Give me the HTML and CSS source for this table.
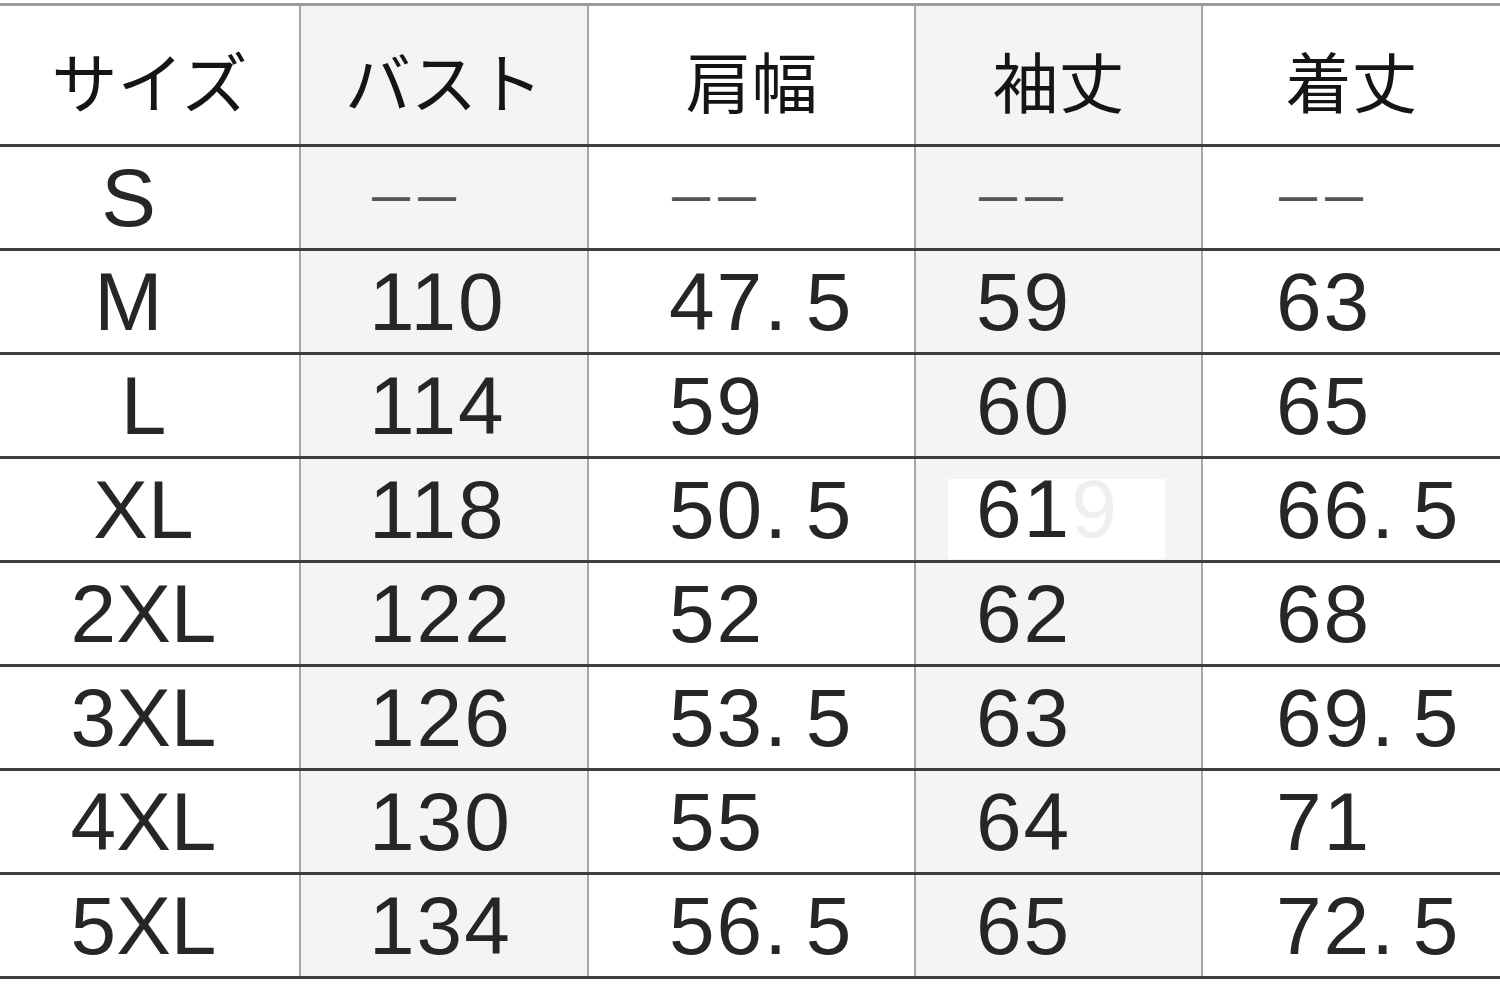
FILE: index.html
```html
<!DOCTYPE html>
<html lang="ja">
<head>
<meta charset="utf-8">
<title>サイズ表</title>
<link rel="stylesheet" href="styles.css">
</head>
<body>
<table class="chart">
  <colgroup>
    <col class="c-size">
    <col class="c-bust">
    <col class="c-shoulder">
    <col class="c-sleeve">
    <col class="c-length">
  </colgroup>
  <thead>
    <tr>
      <th class="head">サイズ</th>
      <th class="head shade">バスト</th>
      <th class="head">肩幅</th>
      <th class="head shade">袖丈</th>
      <th class="head">着丈</th>
    </tr>
  </thead>
  <tbody>
    <tr>
      <td class="size narrow">S</td>
      <td class="num bust shade"><span class="dash">——</span></td>
      <td class="num shoulder"><span class="dash">——</span></td>
      <td class="num sleeve shade"><span class="dash">——</span></td>
      <td class="num length"><span class="dash">——</span></td>
    </tr>
    <tr>
      <td class="size narrow">M</td>
      <td class="num bust shade">110</td>
      <td class="num shoulder">47. 5</td>
      <td class="num sleeve shade">59</td>
      <td class="num length">63</td>
    </tr>
    <tr>
      <td class="size">L</td>
      <td class="num bust shade">114</td>
      <td class="num shoulder">59</td>
      <td class="num sleeve shade">60</td>
      <td class="num length">65</td>
    </tr>
    <tr>
      <td class="size">XL</td>
      <td class="num bust shade">118</td>
      <td class="num shoulder">50. 5</td>
      <td class="num sleeve shade"><span class="patch">61<span class="faint">9</span></span></td>
      <td class="num length">66. 5</td>
    </tr>
    <tr>
      <td class="size">2XL</td>
      <td class="num bust shade">122</td>
      <td class="num shoulder">52</td>
      <td class="num sleeve shade">62</td>
      <td class="num length">68</td>
    </tr>
    <tr>
      <td class="size">3XL</td>
      <td class="num bust shade">126</td>
      <td class="num shoulder">53. 5</td>
      <td class="num sleeve shade">63</td>
      <td class="num length">69. 5</td>
    </tr>
    <tr>
      <td class="size">4XL</td>
      <td class="num bust shade">130</td>
      <td class="num shoulder">55</td>
      <td class="num sleeve shade">64</td>
      <td class="num length">71</td>
    </tr>
    <tr>
      <td class="size">5XL</td>
      <td class="num bust shade">134</td>
      <td class="num shoulder">56. 5</td>
      <td class="num sleeve shade">65</td>
      <td class="num length">72. 5</td>
    </tr>
  </tbody>
</table>
</body>
</html>
```

FILE: styles.css
```css
html, body {
  margin: 0;
  padding: 0;
  background: #ffffff;
  overflow: hidden;
}

.chart {
  width: 1500px;
  margin-top: 3px;
  border-collapse: collapse;
  table-layout: fixed;
  color: #262626;
}

.c-size { width: 300px; }
.c-bust { width: 288px; }
.c-shoulder { width: 327px; }
.c-sleeve { width: 287px; }
.c-length { width: 298px; }

.chart th,
.chart td {
  padding: 0;
  border-left: 2px solid #a6a6a6;
  border-right: 2px solid #a6a6a6;
  border-bottom: 3px solid #3e3e3e;
  vertical-align: middle;
}

.chart th:first-child,
.chart td:first-child {
  border-left: none;
}

.chart th:last-child,
.chart td:last-child {
  border-right: none;
}

.chart th.head {
  height: 130px;
  border-top: 3px solid #9c9c9c;
  padding-top: 8px;
  font-family: "Noto Sans CJK JP", "Noto Sans", sans-serif;
  font-size: 66px;
  font-weight: 400;
  line-height: 1;
  text-align: center;
  color: #151515;
}

.shade {
  background: #f4f4f4;
}

.chart td {
  height: 101px;
  font-family: "Liberation Sans", Arial, sans-serif;
  font-size: 82px;
  line-height: 1;
}

.chart td.size {
  text-align: center;
  padding-right: 12px;
}

.chart td.narrow {
  padding-right: 42px;
}

.num {
  text-align: left;
  letter-spacing: 2px;
  word-spacing: -8px;
}

.chart td.bust { padding-left: 68px; }
.chart td.shoulder { padding-left: 80px; }
.chart td.sleeve { padding-left: 60px; }
.chart td.length { padding-left: 73px; }

.dash {
  display: inline-block;
  margin-left: 3px;
  margin-bottom: 14px;
  font-size: 38px;
  font-weight: 700;
  letter-spacing: 8px;
  color: #555555;
  vertical-align: middle;
}

.patch {
  display: inline-block;
  margin-left: -28px;
  margin-bottom: -8px;
  padding: 0 46px 20px 28px;
  line-height: 60px;
  background: #ffffff;
}

.faint {
  color: #efefef;
}
```
